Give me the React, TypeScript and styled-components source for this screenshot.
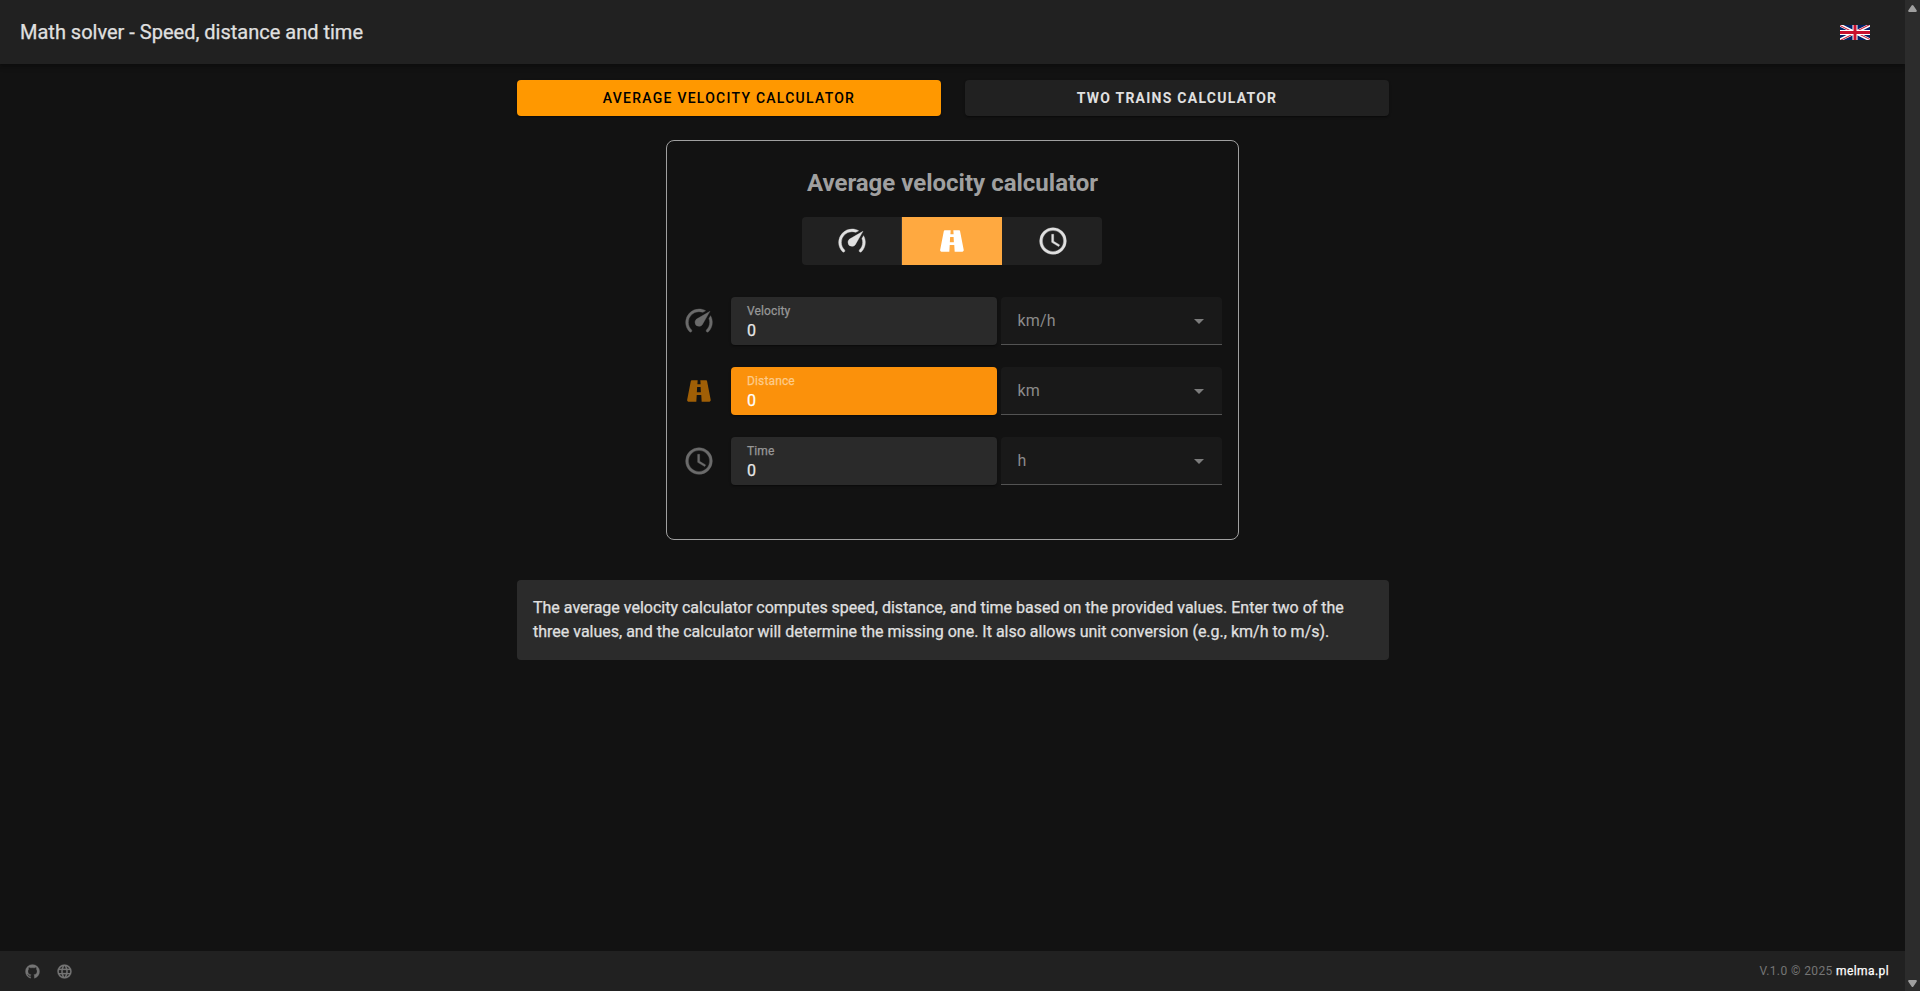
import React, { useState } from "react";
import styled, { createGlobalStyle, css } from "styled-components";

const GlobalStyle = createGlobalStyle`
  *, *::before, *::after { box-sizing: border-box; }
  html, body { margin: 0; padding: 0; background: #121212; overflow: hidden; }
  body { font-family: Roboto, sans-serif; font-size: 16px; line-height: 24px; color: #e0e0e0; }
  button, input { font: inherit; color: inherit; border: 0; padding: 0; background: none; }
`;

const Window = styled.div`
  display: grid;
  grid-template-columns: minmax(0, 1fr) 15px;
  height: 991px;
`;

const Page = styled.div`
  display: flex;
  flex-direction: column;
  min-width: 0;
`;

const Header = styled.header`
  display: flex;
  align-items: center;
  justify-content: space-between;
  height: 64px;
  padding: 0 35px 0 20px;
  background: #212121;
  box-shadow: 0 2px 3px rgba(0, 0, 0, 0.2), 0 3px 6px rgba(0, 0, 0, 0.12);
`;

const sturdy = css`
  -webkit-text-stroke: 0.25px currentColor;
`;

const AppTitle = styled.h1`
  margin: 0;
  font-size: 20px;
  font-weight: 400;
  line-height: 30px;
  ${sturdy}
`;

const Flag = styled.svg`
  display: block;
  width: 30px;
  height: 15px;
`;

const Main = styled.main`
  flex: 1;
  display: flex;
  flex-direction: column;
  align-items: center;
  width: 872px;
  margin: 0 0 0 517px;
  padding-top: 16px;
`;

const Tabs = styled.nav`
  display: grid;
  grid-template-columns: 1fr 1fr;
  gap: 24px;
  width: 100%;
`;

const raised = css`
  box-shadow: 0 2px 1px -1px rgba(0, 0, 0, 0.2), 0 1px 1px rgba(0, 0, 0, 0.14), 0 1px 3px rgba(0, 0, 0, 0.12);
`;

const Tab = styled.button<{ $active?: boolean }>`
  height: 36px;
  border-radius: 4px;
  font-size: 14px;
  font-weight: ${(p) => (p.$active ? 500 : 700)};
  letter-spacing: 1.25px;
  text-transform: uppercase;
  background: ${(p) => (p.$active ? "#ff9800" : "#212121")};
  color: ${(p) => (p.$active ? "#000" : "#e0e0e0")};
  ${raised}
`;

const Card = styled.section`
  display: flex;
  flex-direction: column;
  align-items: center;
  align-self: flex-start;
  width: 573px;
  height: 400px;
  margin: 24px 0 0 149px;
  padding: 0 15px;
  border: 1px solid #a0a0a0;
  border-radius: 8px;
`;

const CardTitle = styled.h2`
  margin: 26px 0 18px;
  font-size: 24px;
  font-weight: 700;
  line-height: 32px;
  color: #a0a0a0;
`;

const Toggle = styled.div`
  display: grid;
  grid-template-columns: 100px 100px 100px;
  height: 48px;
  margin-right: 1px;
  border-radius: 4px;
  overflow: hidden;
  background: #212121;
`;

const ToggleButton = styled.button<{ $active?: boolean }>`
  display: flex;
  align-items: center;
  justify-content: center;
  padding-bottom: 1px;
  color: ${(p) => (p.$active ? "#fff" : "#e0e0e0")};
  background: ${(p) => (p.$active ? "#ffa940" : "transparent")};

  &:first-child {
    border-right: 1px solid #353535;
  }

  &:last-child {
    padding-left: 1px;
  }
`;

const Rows = styled.div`
  display: grid;
  gap: 22px;
  width: 100%;
  margin-top: 32px;
`;

const Row = styled.div`
  display: grid;
  grid-template-columns: 45px 266px 221px;
  column-gap: 4px;
  align-items: center;
  height: 48px;
`;

const RowIcon = styled.div<{ $active?: boolean }>`
  display: flex;
  padding-left: 1px;
  color: ${(p) => (p.$active ? "#a05f06" : "#6b6b6b")};
`;

const Field = styled.label<{ $active?: boolean }>`
  display: flex;
  flex-direction: column;
  height: 48px;
  padding: 6px 16px 0;
  border-radius: 4px;
  background: ${(p) => (p.$active ? "#fb910b" : "#2a2a2a")};
  color: ${(p) => (p.$active ? "#fff" : "#e8e8e8")};
  ${raised}
`;

const FieldLabel = styled.span<{ $active?: boolean }>`
  font-size: 12px;
  line-height: 16px;
  letter-spacing: 0.14px;
  color: ${(p) => (p.$active ? "#fdcb8a" : "#989898")};
  ${sturdy}
`;

const FieldInput = styled.input`
  width: 100%;
  height: 24px;
  line-height: 24px;
  outline: none;
  ${sturdy}
`;

const Select = styled.button`
  display: flex;
  align-items: center;
  justify-content: space-between;
  height: 48px;
  padding: 0 18.5px 0 16.5px;
  border-bottom: 1px solid #535353;
  border-radius: 4px 4px 0 0;
  background: #191919;
  color: #8b8b8b;
  letter-spacing: 0.15px;
`;

const Caret = styled.span`
  margin-top: 2px;
  border: 5px solid transparent;
  border-top-color: #7c7c7c;
  border-bottom: 0;
`;

const Info = styled.p`
  width: 100%;
  height: 80px;
  margin: 40px 0 0;
  padding: 16px;
  border-radius: 4px;
  background: #2b2b2b;
  ${sturdy}
`;

const Footer = styled.footer`
  display: flex;
  align-items: center;
  justify-content: space-between;
  height: 40px;
  padding: 0 16px 0 23.5px;
  background: #212121;
  font-size: 12px;
  letter-spacing: 0.4px;
  color: #757575;
`;

const FooterLinks = styled.div`
  display: flex;
  gap: 15px;
  padding-top: 1px;
`;

const FooterStrong = styled.span`
  color: #fff;
  ${sturdy}
`;

const Scrollbar = styled.div`
  display: flex;
  flex-direction: column;
  align-items: center;
  justify-content: space-between;
  padding: 5px 0 4px;
  background: #2c2c2c;
`;

const Arrow = styled.svg`
  display: block;
  width: 9px;
  height: 7px;
  fill: #9f9f9f;
`;

const paths = {
  speed:
    "M12,16A3,3 0 0,1 9,13C9,11.88 9.61,10.9 10.5,10.39L20.21,4.77L14.68,14.35C14.18,15.33 13.17,16 12,16M12,3C13.81,3 15.5,3.5 16.97,4.32L14.87,5.53C14,5.19 13,5 12,5A8,8 0 0,0 4,13C4,15.21 4.89,17.21 6.34,18.65H6.35C6.74,19.04 6.74,19.67 6.35,20.06C5.96,20.45 5.32,20.45 4.93,20.07V20.07C3.12,18.26 2,15.76 2,13A10,10 0 0,1 12,3M22,13C22,15.76 20.88,18.26 19.07,20.07V20.07C18.68,20.45 18.05,20.45 17.66,20.06C17.27,19.67 17.27,19.04 17.66,18.65V18.65C19.11,17.2 20,15.21 20,13C20,12 19.81,11 19.46,10.1L20.67,8C21.5,9.5 22,11.18 22,13Z",
  road: "M18.1,4.8C18,4.3 17.6,4 17.1,4H13L13.2,7H10.8L11,4H6.8C6.3,4 5.9,4.4 5.8,4.8L3.1,18.8C3,19.4 3.5,20 4.1,20H10L10.3,15H13.7L14,20H19.8C20.4,20 20.9,19.4 20.8,18.8L18.1,4.8M10.4,13L10.6,9H13.2L13.4,13H10.4Z",
  clock:
    "M12,20A8,8 0 0,0 20,12A8,8 0 0,0 12,4A8,8 0 0,0 4,12A8,8 0 0,0 12,20M12,2A10,10 0 0,1 22,12A10,10 0 0,1 12,22C6.47,22 2,17.5 2,12A10,10 0 0,1 12,2M12.5,7V12.25L17,14.92L16.25,16.15L11,13V7H12.5Z",
  github:
    "M12,2A10,10 0 0,0 2,12C2,16.42 4.87,20.17 8.84,21.5C9.34,21.58 9.5,21.27 9.5,21C9.5,20.77 9.5,20.14 9.5,19.31C6.73,19.91 6.14,17.97 6.14,17.97C5.68,16.81 5.03,16.5 5.03,16.5C4.12,15.88 5.1,15.9 5.1,15.9C6.1,15.97 6.63,16.93 6.63,16.93C7.5,18.45 8.97,18 9.54,17.76C9.63,17.11 9.89,16.67 10.17,16.42C7.95,16.17 5.62,15.31 5.62,11.5C5.62,10.39 6,9.5 6.65,8.79C6.55,8.54 6.2,7.5 6.75,6.15C6.75,6.15 7.59,5.88 9.5,7.17C10.29,6.95 11.15,6.84 12,6.84C12.85,6.84 13.71,6.95 14.5,7.17C16.41,5.88 17.25,6.15 17.25,6.15C17.8,7.5 17.45,8.54 17.35,8.79C18,9.5 18.38,10.39 18.38,11.5C18.38,15.32 16.04,16.16 13.81,16.41C14.17,16.72 14.5,17.33 14.5,18.26C14.5,19.6 14.5,20.68 14.5,21C14.5,21.27 14.66,21.59 15.17,21.5C19.14,20.16 22,16.42 22,12A10,10 0 0,0 12,2Z",
  web: "M16.36,14C16.44,13.34 16.5,12.68 16.5,12C16.5,11.32 16.44,10.66 16.36,10H19.74C19.9,10.64 20,11.31 20,12C20,12.69 19.9,13.36 19.74,14M14.59,19.56C15.19,18.45 15.65,17.25 15.97,16H18.92C17.96,17.65 16.43,18.93 14.59,19.56M14.34,14H9.66C9.56,13.34 9.5,12.68 9.5,12C9.5,11.32 9.56,10.65 9.66,10H14.34C14.43,10.65 14.5,11.32 14.5,12C14.5,12.68 14.43,13.34 14.34,14M12,19.96C11.17,18.76 10.5,17.43 10.09,16H13.91C13.5,17.43 12.83,18.76 12,19.96M8,8H5.08C6.03,6.34 7.57,5.06 9.4,4.44C8.8,5.55 8.35,6.75 8,8M5.08,16H8C8.35,17.25 8.8,18.45 9.4,19.56C7.57,18.93 6.03,17.65 5.08,16M4.26,14C4.1,13.36 4,12.69 4,12C4,11.31 4.1,10.64 4.26,10H7.64C7.56,10.66 7.5,11.32 7.5,12C7.5,12.68 7.56,13.34 7.64,14M12,4.03C12.83,5.23 13.5,6.57 13.91,8H10.09C10.5,6.57 11.17,5.23 12,4.03M18.92,8H15.97C15.65,6.75 15.19,5.55 14.59,4.44C16.43,5.07 17.96,6.34 18.92,8M12,2C6.47,2 2,6.5 2,12A10,10 0 0,0 12,22A10,10 0 0,0 22,12A10,10 0 0,0 12,2Z",
};

const Glyph = ({ name, size = 32 }: { name: keyof typeof paths; size?: number }) => (
  <svg
    width={size}
    height={size}
    viewBox="0 0 24 24"
    fill="currentColor"
    stroke="currentColor"
    strokeWidth={name === "road" ? 0 : 0.3}
    aria-hidden="true"
  >
    <path d={paths[name]} />
  </svg>
);

const UnionFlag = () => (
  <Flag viewBox="0 0 60 30" aria-label="English">
    <clipPath id="flag-diagonals">
      <path d="M30,15h30v15zv15h-30zh-30v-15zv-15h30z" />
    </clipPath>
    <path d="M0,0v30h60v-30z" fill="#012169" />
    <path d="M0,0L60,30M60,0L0,30" stroke="#fff" strokeWidth="6" />
    <path d="M0,0L60,30M60,0L0,30" clipPath="url(#flag-diagonals)" stroke="#c8102e" strokeWidth="4" />
    <path d="M30,0v30M0,15h60" stroke="#fff" strokeWidth="10" />
    <path d="M30,0v30M0,15h60" stroke="#c8102e" strokeWidth="6" />
  </Flag>
);

const quantities = [
  { icon: "speed", label: "Velocity", unit: "km/h" },
  { icon: "road", label: "Distance", unit: "km" },
  { icon: "clock", label: "Time", unit: "h" },
] as const;

export default function App() {
  const [target, setTarget] = useState(1);

  return (
    <>
      <GlobalStyle />
      <Window>
        <Page>
          <Header>
            <AppTitle>Math solver - Speed, distance and time</AppTitle>
            <UnionFlag />
          </Header>
          <Main>
            <Tabs>
              <Tab $active>Average velocity calculator</Tab>
              <Tab>Two trains calculator</Tab>
            </Tabs>
            <Card>
              <CardTitle>Average velocity calculator</CardTitle>
              <Toggle>
                {quantities.map((q, i) => (
                  <ToggleButton key={q.label} $active={i === target} aria-label={q.label} onClick={() => setTarget(i)}>
                    <Glyph name={q.icon} />
                  </ToggleButton>
                ))}
              </Toggle>
              <Rows>
                {quantities.map((q, i) => (
                  <Row key={q.label}>
                    <RowIcon $active={i === target}>
                      <Glyph name={q.icon} />
                    </RowIcon>
                    <Field $active={i === target}>
                      <FieldLabel $active={i === target}>{q.label}</FieldLabel>
                      <FieldInput defaultValue="0" />
                    </Field>
                    <Select>
                      {q.unit}
                      <Caret />
                    </Select>
                  </Row>
                ))}
              </Rows>
            </Card>
            <Info>
              The average velocity calculator computes speed, distance, and time based on the provided values. Enter
              two of the three values, and the calculator will determine the missing one. It also allows unit
              conversion (e.g., km/h to m/s).
            </Info>
          </Main>
          <Footer>
            <FooterLinks>
              <Glyph name="github" size={17} />
              <Glyph name="web" size={17} />
            </FooterLinks>
            <span>
              V.1.0 © 2025 <FooterStrong>melma.pl</FooterStrong>
            </span>
          </Footer>
        </Page>
        <Scrollbar>
          <Arrow viewBox="0 0 9 7">
            <path d="M4.5 0Q5 0 5.4 .6L8.8 5.6Q9 7 8 7H1Q0 7 .2 5.6L3.6 .6Q4 0 4.5 0Z" />
          </Arrow>
          <Arrow viewBox="0 0 9 7">
            <path d="M4.5 7Q5 7 5.4 6.4L8.8 1.4Q9 0 8 0H1Q0 0 .2 1.4L3.6 6.4Q4 7 4.5 7Z" />
          </Arrow>
        </Scrollbar>
      </Window>
    </>
  );
}
